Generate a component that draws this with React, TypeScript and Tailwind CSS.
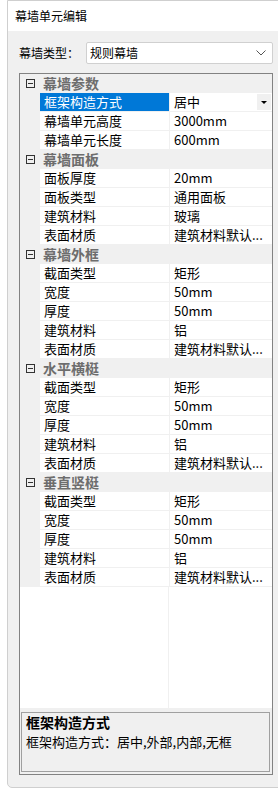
import React from "react";

type Item = { name: string; value: string; selected?: boolean };
type Group = { title: string; items: Item[] };

const frameItems: Item[] = [
  { name: "截面类型", value: "矩形" },
  { name: "宽度", value: "50mm" },
  { name: "厚度", value: "50mm" },
  { name: "建筑材料", value: "铝" },
  { name: "表面材质", value: "建筑材料默认..." },
];

const groups: Group[] = [
  {
    title: "幕墙参数",
    items: [
      { name: "框架构造方式", value: "居中", selected: true },
      { name: "幕墙单元高度", value: "3000mm" },
      { name: "幕墙单元长度", value: "600mm" },
    ],
  },
  {
    title: "幕墙面板",
    items: [
      { name: "面板厚度", value: "20mm" },
      { name: "面板类型", value: "通用面板" },
      { name: "建筑材料", value: "玻璃" },
      { name: "表面材质", value: "建筑材料默认..." },
    ],
  },
  { title: "幕墙外框", items: frameItems },
  { title: "水平横梃", items: frameItems },
  { title: "垂直竖梃", items: frameItems },
];

function Collapse() {
  return (
    <div className="w-[20px] flex items-center justify-center">
      <div className="w-[9px] h-[9px] border border-[#333] flex items-center justify-center">
        <div className="w-[5px] h-px bg-[#333]" />
      </div>
    </div>
  );
}

function Row({ item }: { item: Item }) {
  return (
    <div className="flex h-[19px] pl-[20px] pb-px gap-px bg-[#f0f0f0]">
      <div
        className={
          item.selected
            ? "w-[129px] bg-[#0078d7] text-white pl-[4px] leading-[18px]"
            : "w-[129px] bg-white pl-[4px] leading-[18px]"
        }
      >
        {item.name}
      </div>
      <div className="flex-1 bg-white pl-[4px] leading-[18px] flex items-center justify-between">
        <span>{item.value}</span>
        {item.selected && (
          <div className="w-[14px] h-[16px] mr-px bg-[#f0f0f0] flex items-center justify-center">
            <div className="w-0 h-0 border-l-[3px] border-r-[3px] border-t-[3px] border-l-transparent border-r-transparent border-t-black" />
          </div>
        )}
      </div>
    </div>
  );
}

export default function App() {
  return (
    <div
      className="w-[278px] h-[795px] bg-white overflow-hidden text-[13px] text-black"
      style={{ fontFamily: '"Noto Sans CJK SC", "Noto Sans", sans-serif' }}
    >
      <div className="ml-[7px] w-[300px] h-[788px] border border-[#cfcfcf] rounded-b-[5px] bg-[#f0f0f0] flex flex-col">
        {/* title */}
        <div className="h-[30px] bg-white pl-[7px] flex items-center text-[12px]">幕墙单元编辑</div>

        {/* type select */}
        <div className="flex items-center mt-[11px] pl-[11px] h-[22px]">
          <div className="w-[67px] text-[12px]">幕墙类型：</div>
          <div className="w-[187px] h-[22px] bg-white border border-[#d0d0d0] rounded-[2px] flex items-center justify-between pl-[3px] pr-[6px] text-[12px]">
            <span>规则幕墙</span>
            <svg width="10" height="6" viewBox="0 0 10 6">
              <path d="M0.5 0.5 L5 5 L9.5 0.5" fill="none" stroke="#555" strokeWidth="1" />
            </svg>
          </div>
        </div>

        {/* property grid */}
        <div className="ml-[11px] mt-[9px] w-[254px] h-[702px] border border-[#828282] flex flex-col">
          <div className="flex-1 bg-white flex flex-col">
            {groups.map((g) => (
              <div key={g.title}>
                <div className="flex h-[19px] pb-px bg-[#f0f0f0]">
                  <Collapse />
                  <div className="pl-[3px] font-bold text-[14px] text-[#6d6d6d] leading-[18px]">{g.title}</div>
                </div>
                {g.items.map((it, i) => (
                  <Row key={g.title + i} item={it} />
                ))}
              </div>
            ))}
            <div className="flex-1 flex">
              <div className="w-[149px] border-r border-[#f0f0f0]" />
            </div>
          </div>
          <div className="h-[4px] bg-[#f0f0f0]" />
          <div className="bg-[#f0f0f0] pb-[2px] pl-px pr-[2px]">
            <div className="h-[60px] border border-[#a0a0a0] px-[4px]">
              <div className="font-bold text-[14px] leading-[18px]">框架构造方式</div>
              <div className="text-[13px] leading-[18px] mt-[2px]">框架构造方式：居中,外部,内部,无框</div>
            </div>
          </div>
        </div>
      </div>
    </div>
  );
}
